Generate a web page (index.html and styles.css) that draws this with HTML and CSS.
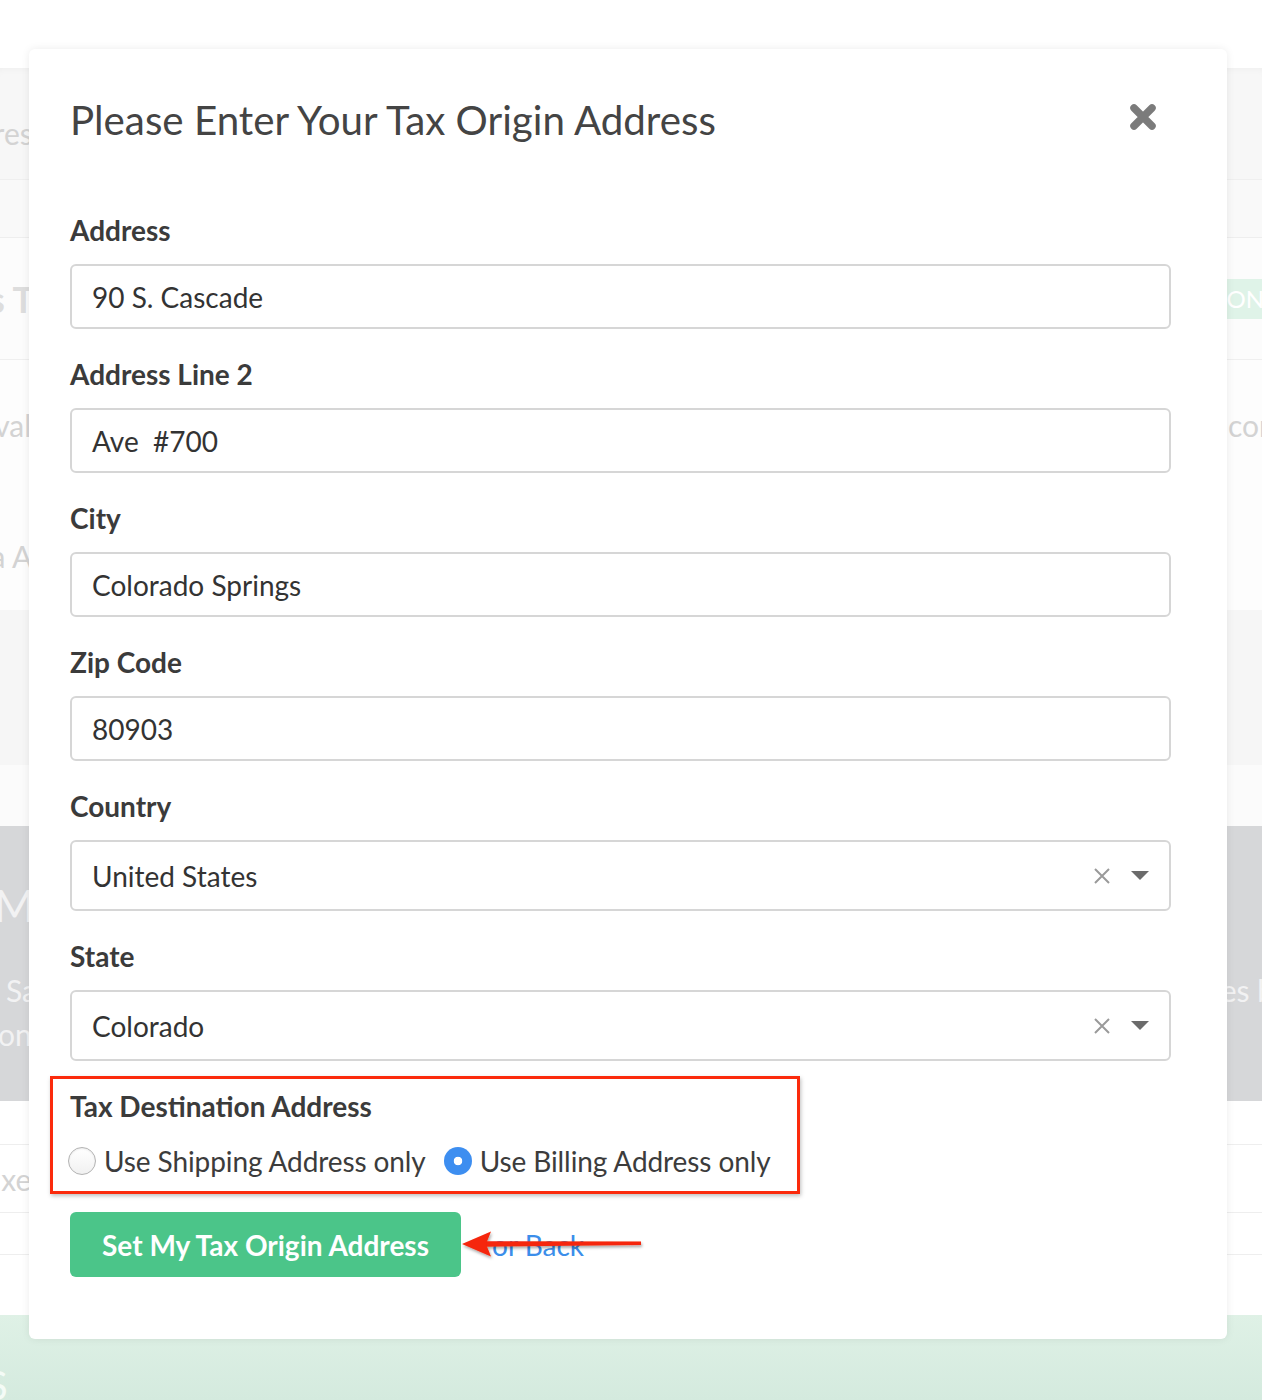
FILE: index.html
```html
<!DOCTYPE html>
<html lang="en">
<head>
<meta charset="utf-8">
<title>Tax Origin Address</title>
<link rel="stylesheet" href="styles.css">
</head>
<body>
<div class="page">
  <div class="band b-top"></div>
  <div class="band b-head"><span class="ghost g-res">Addres</span><span></span></div>
  <div class="band b-sub"></div>
  <div class="band b-row"><span class="ghost g-bold">Taxes T</span><span class="badge">ON</span></div>
  <div class="band b-text">
    <div class="ghost-line"><span class="ghost g-val">Interval</span><span class="ghost g-cor">cor</span></div>
    <div class="ghost-line l2"><span class="ghost g-aa">Via A</span><span></span></div>
  </div>
  <div class="band b-grey1"></div>
  <div class="band b-grey2"></div>
  <div class="band b-dark">
    <div class="ghost-line"><span class="ghost g-m">M</span><span></span></div>
    <div class="ghost-line l3"><span class="ghost g-sa">Sa</span><span class="ghost g-esb">es b</span></div>
    <div class="ghost-line l4"><span class="ghost g-con">con</span><span></span></div>
  </div>
  <div class="band b-w1"></div>
  <div class="band b-w2"><span class="ghost g-axe">Taxe</span><span></span></div>
  <div class="band b-w3"></div>
  <div class="band b-w4"></div>
  <div class="band b-green"><span class="ghost g-s">S</span><span></span></div>
</div>

<div class="modal">
  <div class="modal-head">
    <h2 class="title">Please Enter Your Tax Origin Address</h2>
    <svg class="close" width="28" height="28" viewBox="0 0 28 28" aria-label="Close">
      <path d="M5 5 L23 23 M23 5 L5 23" stroke="#7b7b7b" stroke-width="7.5" stroke-linecap="round" fill="none"/>
    </svg>
  </div>
  <form class="form">
    <div class="group">
      <label class="label">Address</label>
      <div class="field">90 S. Cascade</div>
    </div>
    <div class="group">
      <label class="label">Address Line 2</label>
      <div class="field">Ave&nbsp; #700</div>
    </div>
    <div class="group">
      <label class="label">City</label>
      <div class="field">Colorado Springs</div>
    </div>
    <div class="group">
      <label class="label">Zip Code</label>
      <div class="field">80903</div>
    </div>
    <div class="group">
      <label class="label">Country</label>
      <div class="field select">
        <span class="sel-text">United States</span>
        <span class="sel-icons">
          <svg class="clear" width="18" height="18" viewBox="0 0 18 18"><path d="M2 2 L16 16 M16 2 L2 16" stroke="#9a9a9a" stroke-width="2" fill="none"/></svg>
          <svg class="caret" width="18" height="9" viewBox="0 0 18 9"><path d="M0 0 H18 L9 9 Z" fill="#6b6b6b"/></svg>
        </span>
      </div>
    </div>
    <div class="group">
      <label class="label">State</label>
      <div class="field select">
        <span class="sel-text">Colorado</span>
        <span class="sel-icons">
          <svg class="clear" width="18" height="18" viewBox="0 0 18 18"><path d="M2 2 L16 16 M16 2 L2 16" stroke="#9a9a9a" stroke-width="2" fill="none"/></svg>
          <svg class="caret" width="18" height="9" viewBox="0 0 18 9"><path d="M0 0 H18 L9 9 Z" fill="#6b6b6b"/></svg>
        </span>
      </div>
    </div>
    <div class="group tax">
      <label class="label">Tax Destination Address</label>
      <div class="radios">
        <span class="radio-opt"><span class="radio"></span>Use Shipping Address only</span>
        <span class="radio-opt"><span class="radio checked"></span>Use Billing Address only</span>
      </div>
    </div>
    <div class="actions">
      <button type="button" class="btn">Set My Tax Origin Address</button>
      <a class="back" href="#">or Back</a>
      <svg class="arrow" width="190" height="40" viewBox="0 0 190 40">
        <defs>
          <filter id="sh" x="-10%" y="-30%" width="120%" height="160%">
            <feDropShadow dx="1" dy="2" stdDeviation="1.5" flood-color="#000" flood-opacity="0.35"/>
          </filter>
        </defs>
        <g filter="url(#sh)">
          <path d="M24 16.3 L181 16.5 L181 20 L24 21.7 Z" fill="#f5250a"/>
          <path d="M2 19 L31 6.5 L26 19 L31 31.5 Z" fill="#f5250a"/>
        </g>
      </svg>
    </div>
  </form>
</div>
</body>
</html>
```
FILE: styles.css
```css
*, *::before, *::after { box-sizing: border-box; }
html, body { margin: 0; padding: 0; }
body {
  width: 1262px;
  height: 1400px;
  overflow: hidden;
  background: #fff;
  position: relative;
  font-family: Lato, "Open Sans", "Liberation Sans", sans-serif;
}

/* faded page behind modal */
.page { display: flex; flex-direction: column; width: 1262px; }
.band {
  display: flex;
  justify-content: space-between;
  align-items: center;
  white-space: nowrap;
  overflow: hidden;
  flex: none;
}
.ghost { color: #d3d3d3; font-size: 30px; }
.b-top { height: 68px; background: #fff; }
.b-head { height: 112px; background: #f7f7f7; box-shadow: inset 0 6px 8px -6px rgba(0,0,0,0.05); border-bottom: 1px solid #efefef; padding-top: 18px; }
.g-res { margin-left: -60px; }
.b-sub { height: 58px; background: #f9f9f9; border-bottom: 1px solid #eeeeee; }
.b-row { height: 122px; background: #fcfcfc; border-bottom: 1px solid #efefef; }
.g-bold { font-weight: 700; font-size: 36px; color: #dddddd; margin-left: -84px; }
.badge { background: #dff3e8; color: #fff; font-size: 24px; height: 40px; line-height: 40px; padding: 0 12px 0 2px; margin-right: -14px; }
.b-text { height: 250px; background: #fdfdfd; flex-direction: column; align-items: stretch; justify-content: flex-start; }
.ghost-line { display: flex; justify-content: space-between; }
.b-text .ghost-line { margin-top: 47px; height: 36px; line-height: 36px; }
.b-text .l2 { margin-top: 95px; }
.g-val { margin-left: -68px; }
.g-cor { margin-right: -8px; }
.g-aa { margin-left: -37px; }
.b-grey1 { height: 155px; background: #f6f6f6; }
.b-grey2 { height: 61px; background: #fbfbfb; }
.b-dark { height: 275px; background: #d6d7d9; flex-direction: column; align-items: stretch; justify-content: flex-start; }
.b-dark .ghost { color: #f2f2f3; }
.b-dark .ghost-line { height: 40px; line-height: 40px; }
.b-dark .ghost-line:first-child { margin-top: 57px; height: 44px; line-height: 44px; }
.g-m { font-size: 44px; margin-left: -6px; }
.b-dark .l3 { margin-top: 43px; }
.b-dark .l4 { margin-top: 4px; }
.g-sa { margin-left: 6px; }
.g-esb { margin-right: -12px; }
.g-con { margin-left: -16px; }
.b-w1 { height: 44px; background: #fff; border-bottom: 1px solid #eeeeee; }
.b-w2 { height: 68px; background: #fff; border-bottom: 1px solid #eeeeee; }
.g-axe { margin-left: -28px; }
.b-w3 { height: 42px; background: #fff; border-bottom: 1px solid #eeeeee; }
.b-w4 { height: 60px; background: #fff; }
.b-green { height: 85px; background: linear-gradient(#dff1e6, #d4eade); align-items: flex-end; }
.g-s { color: #f4fbf6; font-size: 40px; margin-left: -14px; line-height: 30px; }

/* modal */
.modal {
  position: absolute;
  left: 29px;
  top: 49px;
  width: 1198px;
  height: 1290px;
  background: #fff;
  border-radius: 6px;
  box-shadow: 0 0 8px rgba(0,0,0,0.08);
  padding: 49px 56px 0 41px;
}
.modal-head {
  display: flex;
  justify-content: space-between;
  align-items: center;
  height: 44px;
}
.title {
  margin: 0;
  font-size: 40.3px;
  line-height: 44px;
  font-weight: 400;
  color: #444444;
}
.close { margin-right: 14px; margin-top: -7px; }

.form { margin-top: 71px; display: flex; flex-direction: column; }
.group { margin-bottom: 28px; }
.label {
  display: block;
  font-size: 28px;
  line-height: 34px;
  font-weight: 700;
  color: #3b3b3b;
  margin-bottom: 17px;
}
.field {
  height: 65px;
  border: 2px solid #d6d6d6;
  border-radius: 6px;
  padding: 0 20px;
  display: flex;
  align-items: center;
  font-size: 28px;
  color: #333333;
}
.select { height: 71px; justify-content: space-between; padding-right: 20px; }
.sel-icons { display: flex; align-items: center; gap: 20px; }
.clear { display: block; }
.caret { display: block; }

.tax { position: relative; margin-bottom: 34px; }
.tax::before {
  content: "";
  position: absolute;
  left: -20px;
  top: -13px;
  width: 750px;
  height: 118px;
  border: 3px solid #fb2a0c;
  box-shadow: 1px 2px 4px rgba(0,0,0,0.25);
  pointer-events: none;
}
.radios {
  display: flex;
  align-items: center;
  height: 34px;
  margin-top: 21px;
  font-size: 28px;
  letter-spacing: -0.1px;
  color: #3c3c3c;
}
.radio-opt { display: flex; align-items: center; }
.radio-opt + .radio-opt { margin-left: 18px; }
.radio {
  width: 28px;
  height: 28px;
  border-radius: 50%;
  border: 1px solid #b3b3b3;
  background: linear-gradient(#ffffff, #f1f1f1);
  box-shadow: inset 0 1px 2px rgba(0,0,0,0.08);
  margin-right: 8px;
  flex: none;
}
.radios .radio-opt:first-child .radio { margin-left: -2px; }
.radio.checked {
  border: none;
  background: radial-gradient(circle, #ffffff 0 4px, #3d8ef0 4.6px);
  box-shadow: none;
}

.actions { display: flex; align-items: center; position: relative; height: 65px; }
.btn {
  width: 391px;
  height: 65px;
  background: #4bc589;
  border: none;
  border-radius: 6px;
  color: #fff;
  font-family: inherit;
  font-size: 28px;
  font-weight: 700;
  padding: 0;
}
.back {
  margin-left: 31px;
  color: #3b8eea;
  text-decoration: none;
  font-size: 28px;
}
.arrow {
  position: absolute;
  left: 390px;
  top: 13px;
}
```
